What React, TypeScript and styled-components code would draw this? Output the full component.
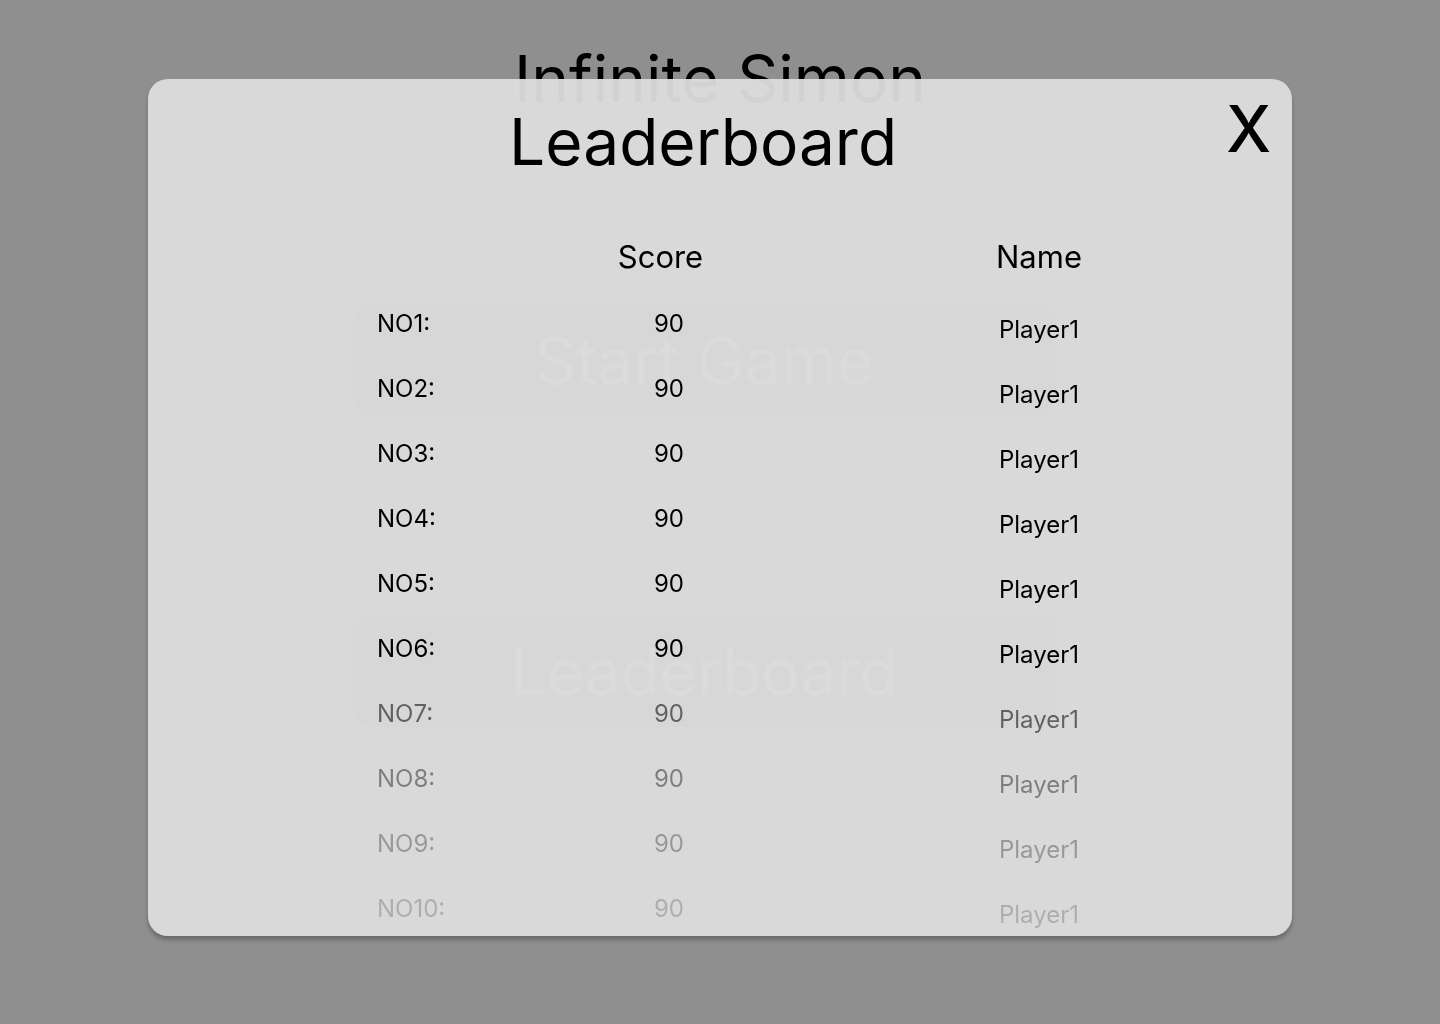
import React from "react";
import styled, { createGlobalStyle } from "styled-components";

const GlobalStyle = createGlobalStyle`
  body {
    margin: 0;
    background: #8f8f8f;
    font-family: Inter, "Noto Sans", sans-serif;
    color: #000;
  }
`;

const Page = styled.div`
  display: flex;
  flex-direction: column;
  align-items: center;
  min-height: 1024px;
  padding-top: 40px;
  box-sizing: border-box;
`;

const GameTitle = styled.h1`
  margin: 0;
  font-size: 64px;
  font-weight: 400;
  line-height: normal;
`;

const Menu = styled.div`
  display: flex;
  flex-direction: column;
  gap: 199px;
  margin: 187px 31px 0 0;
`;

const MenuButton = styled.button`
  width: 705px;
  height: 112px;
  border: none;
  border-radius: 20px;
  background: #666666;
  color: #b0b0b0;
  font-family: inherit;
  font-size: 64px;
  cursor: pointer;
`;

const Overlay = styled.div`
  position: fixed;
  inset: 0;
  display: flex;
  justify-content: center;
  align-items: flex-start;
  padding-top: 79px;
`;

const Modal = styled.div`
  display: flex;
  flex-direction: column;
  width: 1144px;
  height: 857px;
  background: rgba(221, 221, 221, 0.95);
  border-radius: 20px;
  box-shadow: 0 4px 4px rgba(0, 0, 0, 0.25);
  overflow: hidden;
`;

const ModalHeader = styled.div`
  display: flex;
  align-items: flex-start;
  padding: 11px 21px 0 32px;
`;

const ModalTitle = styled.h2`
  flex: 1;
  margin: 13px 0 0;
  text-align: center;
  font-size: 64px;
  font-weight: 400;
  line-height: normal;
`;

const CloseButton = styled.button`
  padding: 0;
  border: none;
  background: none;
  color: #000;
  font-family: inherit;
  font-size: 64px;
  font-weight: 500;
  line-height: normal;
  cursor: pointer;
`;

const Board = styled.div`
  margin: 58px 0 0 229px;
`;

const HeadRow = styled.div`
  display: grid;
  grid-template-columns: 200px 167px 195px 200px;
`;

const HeadCell = styled.div`
  font-size: 31px;
  text-align: center;
  line-height: normal;
`;

const Rows = styled.div`
  margin-top: 34px;
`;

const Row = styled.div<{ $fade: number }>`
  display: grid;
  grid-template-columns: 200px 184px 178px 200px;
  height: 65px;
  font-size: 24px;
  line-height: normal;
  opacity: ${(p) => p.$fade};
`;

const RankCell = styled.div`
  text-align: left;
`;

const ScoreCell = styled.div`
  grid-column: 2;
  text-align: center;
`;

const NameCell = styled.div`
  grid-column: 4;
  text-align: center;
  padding-top: 6px;
`;

type Entry = { score: number; name: string };

const entries: Entry[] = Array.from({ length: 10 }, () => ({
  score: 90,
  name: "Player1",
}));

const fades = [1, 1, 1, 1, 1, 1, 0.55, 0.42, 0.3, 0.2];

const App: React.FC = () => {
  return (
    <>
      <GlobalStyle />
      <Page>
        <GameTitle>Infinite Simon</GameTitle>
        <Menu>
          <MenuButton>Start Game</MenuButton>
          <MenuButton>Leaderboard</MenuButton>
        </Menu>
      </Page>
      <Overlay>
        <Modal>
          <ModalHeader>
            <ModalTitle>Leaderboard</ModalTitle>
            <CloseButton aria-label="Close">X</CloseButton>
          </ModalHeader>
          <Board>
            <HeadRow>
              <span />
              <HeadCell>Score</HeadCell>
              <span />
              <HeadCell>Name</HeadCell>
            </HeadRow>
            <Rows>
              {entries.map((entry, i) => (
                <Row key={i} $fade={fades[i]}>
                  <RankCell>NO{i + 1}:</RankCell>
                  <ScoreCell>{entry.score}</ScoreCell>
                  <NameCell>{entry.name}</NameCell>
                </Row>
              ))}
            </Rows>
          </Board>
        </Modal>
      </Overlay>
    </>
  );
};

export default App;
